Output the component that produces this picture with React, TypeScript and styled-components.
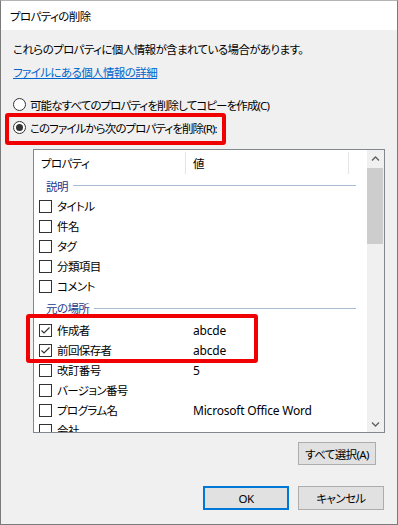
import * as React from 'react'
import styled, { createGlobalStyle } from 'styled-components'

// リストに並べるプロパティ
type Item = { name: string; value?: string; checked?: boolean }
type Group = { title: string; items: Item[] }

const groups: Group[] = [
  {
    title: '説明',
    items: [{ name: 'タイトル' }, { name: '件名' }, { name: 'タグ' }, { name: '分類項目' }, { name: 'コメント' }],
  },
  {
    title: '元の場所',
    items: [
      { name: '作成者', value: 'abcde', checked: true },
      { name: '前回保存者', value: 'abcde', checked: true },
      { name: '改訂番号', value: '5' },
      { name: 'バージョン番号' },
      { name: 'プログラム名', value: 'Microsoft Office Word' },
      { name: '会社' },
    ],
  },
]

const GlobalStyle = createGlobalStyle`
  html, body {
    margin: 0;
    padding: 0;
    background: #fff;
  }
  body {
    color: #000;
    font-family: "Noto Sans", "Noto Sans CJK JP", sans-serif;
    font-feature-settings: "palt";
    font-size: 11.5px;
    letter-spacing: -0.6px;
  }
`

const Window = styled.div`
  background: #f0f0f0;
  border: 1px solid #7a7a7a;
  border-top-color: #b4b4b4;
  box-sizing: border-box;
  display: flex;
  flex-direction: column;
  height: 525px;
  position: relative;
  width: 398px;
`

const TitleBar = styled.div`
  align-items: center;
  background: #fff;
  display: flex;
  height: 29px;
  padding-left: 9px;
`

const Body = styled.div`
  display: flex;
  flex-direction: column;
  padding: 12px 12px 0 12px;
`

const Line = styled.div`
  line-height: 16px;
  white-space: nowrap;
`

const LinkText = styled.a`
  align-self: flex-start;
  color: #0066cc;
  line-height: 16px;
  margin-top: 7px;
  text-decoration: underline;
`

const RadioGroup = styled.div`
  display: flex;
  flex-direction: column;
  margin-top: 12px;
`

const RadioRow = styled.label`
  align-items: center;
  display: flex;
  gap: 4px;
  height: 23px;
  letter-spacing: -0.9px;
  white-space: nowrap;
`

const RadioCircle = styled.span<{ $on?: boolean }>`
  align-items: center;
  background: #fff;
  border: 1px solid #333;
  border-radius: 50%;
  box-sizing: border-box;
  display: flex;
  flex: none;
  height: 13px;
  justify-content: center;
  width: 13px;

  &::after {
    background: #333;
    border-radius: 50%;
    content: '';
    display: ${(p) => (p.$on ? 'block' : 'none')};
    height: 7px;
    width: 7px;
  }
`

const ListBox = styled.div`
  background: #fff;
  border: 1px solid #828790;
  box-sizing: border-box;
  display: flex;
  height: 284px;
  margin: 10px 0 0 20px;
`

const ListContent = styled.div`
  flex: 1;
  overflow: hidden;
`

const HeaderRow = styled.div`
  display: flex;
  height: 25px;
`

const HeaderCell = styled.div<{ $w: number }>`
  align-items: center;
  box-sizing: border-box;
  display: flex;
  padding-left: 7px;
  position: relative;
  width: ${(p) => p.$w}px;

  &::after {
    background: #e5e5e5;
    bottom: 1px;
    content: '';
    position: absolute;
    right: 0;
    top: 2px;
    width: 1px;
  }
`

const GroupHeader = styled.div<{ $h: number }>`
  align-items: center;
  color: #1b3a8c;
  display: flex;
  height: ${(p) => p.$h}px;
  padding-left: 12px;
`

const GroupLine = styled.span`
  background: #a9bccf;
  flex: 1;
  height: 1px;
  margin: 0 11px 0 5px;
`

const Row = styled.div`
  align-items: center;
  display: flex;
  height: 20px;
  white-space: nowrap;
`

const NameCell = styled.div`
  align-items: center;
  box-sizing: border-box;
  display: flex;
  gap: 5px;
  padding-left: 5px;
  width: 152px;
`

const ValueCell = styled.div`
  font-size: 12px;
  letter-spacing: -0.2px;
  padding-left: 7px;
`

const CheckBox = styled.span`
  background: #fff;
  border: 1px solid #333;
  box-sizing: border-box;
  display: block;
  flex: none;
  height: 13px;
  width: 13px;

  svg {
    display: block;
  }
`

const ScrollBar = styled.div`
  background: #f0f0f0;
  display: flex;
  flex-direction: column;
  width: 17px;
`

const ScrollArrow = styled.div`
  align-items: center;
  display: flex;
  height: 17px;
  justify-content: center;
`

const ScrollThumb = styled.div`
  background: #cdcdcd;
  height: 76px;
  margin: 1px 1px 0 0;
`

const ScrollSpace = styled.div`
  flex: 1;
`

const ButtonRow = styled.div<{ $top: number; $right: number }>`
  display: flex;
  gap: 9px;
  justify-content: flex-end;
  margin-right: ${(p) => p.$right}px;
  margin-top: ${(p) => p.$top}px;
`

const Button = styled.button<{ $w: number; $h: number; $primary?: boolean }>`
  background: #e1e1e1;
  border: 1px solid ${(p) => (p.$primary ? '#0078d7' : '#adadad')};
  box-shadow: ${(p) => (p.$primary ? 'inset 0 0 0 1px #0078d7' : 'none')};
  box-sizing: border-box;
  color: #000;
  font: inherit;
  height: ${(p) => p.$h}px;
  letter-spacing: inherit;
  padding: 0;
  white-space: nowrap;
  width: ${(p) => p.$w}px;
`

// 赤枠の強調表示
const Highlight = styled.div<{ $x: number; $y: number; $w: number; $h: number }>`
  border: 4px solid #f00000;
  border-radius: 3px;
  box-sizing: border-box;
  height: ${(p) => p.$h}px;
  left: ${(p) => p.$x}px;
  pointer-events: none;
  position: absolute;
  top: ${(p) => p.$y}px;
  width: ${(p) => p.$w}px;
`

const Chevron: React.FC<{ down?: boolean }> = ({ down }) => (
  <svg width="9" height="6" viewBox="0 0 9 6">
    <polyline
      points={down ? '1,1.5 4.5,5 8,1.5' : '1,4.5 4.5,1 8,4.5'}
      fill="none"
      stroke="#606060"
      strokeWidth="1.3"
    />
  </svg>
)

const Check: React.FC<{ checked?: boolean }> = ({ checked }) => (
  <CheckBox>
    {checked && (
      <svg width="11" height="11" viewBox="0 0 11 11">
        <polyline points="1.5,5.5 4,8 9.5,2.5" fill="none" stroke="#333" strokeWidth="1.2" />
      </svg>
    )}
  </CheckBox>
)

export default function App() {
  return (
    <>
      <GlobalStyle />
      <Window>
        <TitleBar>プロパティの削除</TitleBar>
        <Body>
          <Line>これらのプロパティに個人情報が含まれている場合があります。</Line>
          <LinkText>ファイルにある個人情報の詳細</LinkText>
          <RadioGroup>
            <RadioRow>
              <RadioCircle />
              可能なすべてのプロパティを削除してコピーを作成(C)
            </RadioRow>
            <RadioRow>
              <RadioCircle $on />
              このファイルから次のプロパティを削除(R):
            </RadioRow>
          </RadioGroup>

          <ListBox>
            <ListContent>
              <HeaderRow>
                <HeaderCell $w={152}>プロパティ</HeaderCell>
                <HeaderCell $w={163}>値</HeaderCell>
              </HeaderRow>
              {groups.map((g, gi) => (
                <React.Fragment key={g.title}>
                  <GroupHeader $h={gi === 0 ? 21 : 24}>
                    {g.title}
                    <GroupLine />
                  </GroupHeader>
                  {g.items.map((it) => (
                    <Row key={it.name}>
                      <NameCell>
                        <Check checked={it.checked} />
                        {it.name}
                      </NameCell>
                      <ValueCell>{it.value}</ValueCell>
                    </Row>
                  ))}
                </React.Fragment>
              ))}
            </ListContent>
            <ScrollBar>
              <ScrollArrow>
                <Chevron />
              </ScrollArrow>
              <ScrollThumb />
              <ScrollSpace />
              <ScrollArrow>
                <Chevron down />
              </ScrollArrow>
            </ScrollBar>
          </ListBox>

          <ButtonRow $top={9} $right={9}>
            <Button $w={78} $h={23}>すべて選択(A)</Button>
          </ButtonRow>
          <ButtonRow $top={21} $right={1}>
            <Button $w={86} $h={24} $primary>
              OK
            </Button>
            <Button $w={86} $h={24}>キャンセル</Button>
          </ButtonRow>
        </Body>

        <Highlight $x={4} $y={112} $w={221} $h={32} />
        <Highlight $x={25} $y={313} $w={232} $h={49} />
      </Window>
    </>
  )
}
